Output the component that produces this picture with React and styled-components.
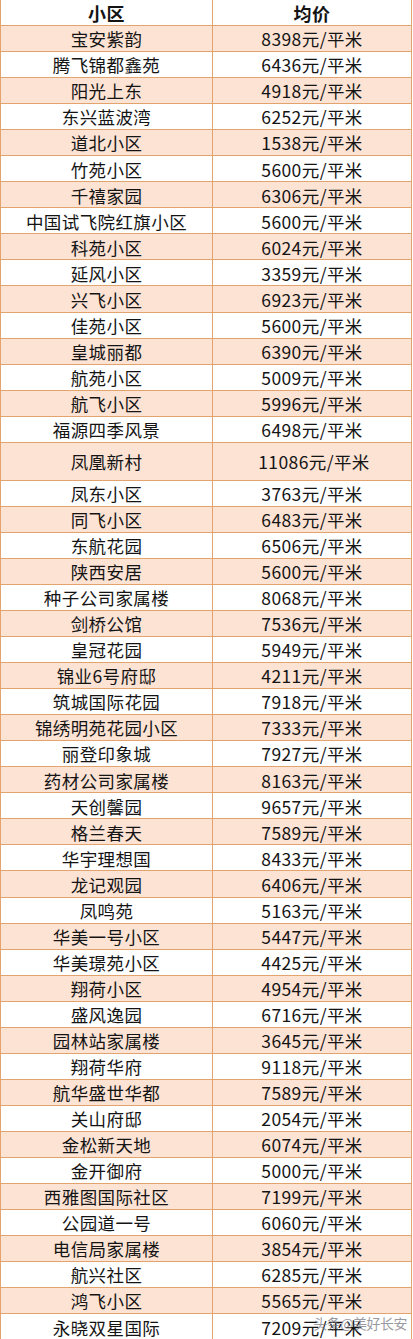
import React from 'react';
import styled, { createGlobalStyle } from 'styled-components';

const GlobalStyle = createGlobalStyle`
  html, body {
    margin: 0;
    padding: 0;
    background: #ffffff;
  }
  body {
    font-family: 'Noto Sans CJK SC', 'Noto Sans', sans-serif;
    color: #141414;
  }
`;

const rows = [
  ['宝安紫韵', 8398], ['腾飞锦都鑫苑', 6436], ['阳光上东', 4918], ['东兴蓝波湾', 6252],
  ['道北小区', 1538], ['竹苑小区', 5600], ['千禧家园', 6306], ['中国试飞院红旗小区', 5600],
  ['科苑小区', 6024], ['延风小区', 3359], ['兴飞小区', 6923], ['佳苑小区', 5600],
  ['皇城丽都', 6390], ['航苑小区', 5009], ['航飞小区', 5996], ['福源四季风景', 6498],
  ['凤凰新村', 11086], ['凤东小区', 3763], ['同飞小区', 6483], ['东航花园', 6506],
  ['陕西安居', 5600], ['种子公司家属楼', 8068], ['剑桥公馆', 7536], ['皇冠花园', 5949],
  ['锦业6号府邸', 4211], ['筑城国际花园', 7918], ['锦绣明苑花园小区', 7333], ['丽登印象城', 7927],
  ['药材公司家属楼', 8163], ['天创馨园', 9657], ['格兰春天', 7589], ['华宇理想国', 8433],
  ['龙记观园', 6406], ['凤鸣苑', 5163], ['华美一号小区', 5447], ['华美璟苑小区', 4425],
  ['翔荷小区', 4954], ['盛风逸园', 6716], ['园林站家属楼', 3645], ['翔荷华府', 9118],
  ['航华盛世华都', 7589], ['关山府邸', 2054], ['金松新天地', 6074], ['金开御府', 5000],
  ['西雅图国际社区', 7199], ['公园道一号', 6060], ['电信局家属楼', 3854], ['航兴社区', 6285],
  ['鸿飞小区', 5565], ['永晓双星国际', 7209],
];

const Page = styled.div`
  position: relative;
  width: 413px;
  height: 1339px;
  overflow: hidden;
  background: #ffffff;
`;

const Table = styled.div`
  width: 412px;
  border-left: 1px solid #e3a36c;
  border-right: 1px solid #e3a36c;
  box-sizing: border-box;
`;

const Row = styled.div`
  display: grid;
  grid-template-columns: 212px 1fr;
  height: ${(p) => (p.$tall ? 38 : p.$head ? 26 : 26.06)}px;
  background: ${(p) => (p.$shade ? '#fde3d4' : '#ffffff')};
  border-bottom: 1px solid #e3a36c;
  box-sizing: border-box;
`;

const Cell = styled.div`
  display: flex;
  align-items: center;
  justify-content: center;
  font-size: ${(p) => (p.$head ? 18 : 17.5)}px;
  font-weight: ${(p) => (p.$head ? 700 : 400)};
  letter-spacing: 0.4px;
  line-height: 1;
  padding-top: 1px;
  &:first-child {
    border-right: 1px solid #e3a36c;
  }
`;

const Price = styled.span`
  padding-left: ${(p) => (p.$wide ? 4 : 0)}px;
`;

const Watermark = styled.div`
  position: absolute;
  right: 6px;
  bottom: 6px;
  font-size: 14px;
  color: rgba(120, 120, 130, 0.75);
  letter-spacing: -0.5px;
`;

export default function App() {
  return (
    <Page>
      <GlobalStyle />
      <Table>
        <Row $head>
          <Cell $head>小区</Cell>
          <Cell $head>均价</Cell>
        </Row>
        {rows.map(([name, price], i) => (
          <Row key={name + i} $shade={i % 2 === 0} $tall={name === '凤凰新村'}>
            <Cell>{name}</Cell>
            <Cell>
              <Price $wide={price > 9999}>{price}元/平米</Price>
            </Cell>
          </Row>
        ))}
      </Table>
      <Watermark>头条@美好长安</Watermark>
    </Page>
  );
}
